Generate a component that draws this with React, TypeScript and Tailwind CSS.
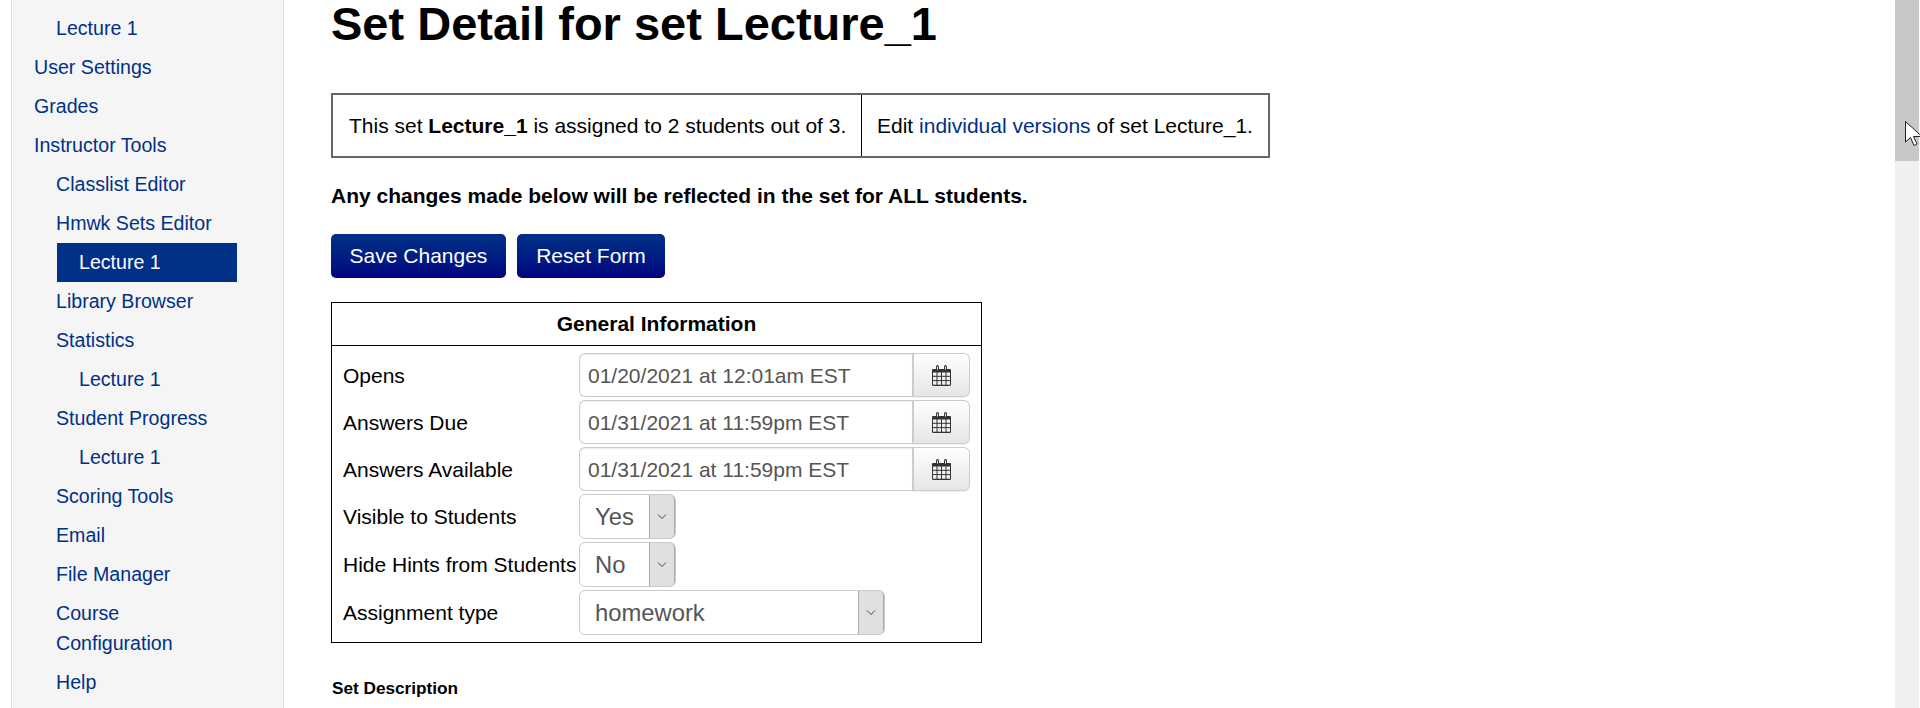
import React from "react";

const navItems = [
  { label: "Lecture 1", depth: 1 },
  { label: "User Settings", depth: 0 },
  { label: "Grades", depth: 0 },
  { label: "Instructor Tools", depth: 0 },
  { label: "Classlist Editor", depth: 1 },
  { label: "Hmwk Sets Editor", depth: 1 },
  { label: "Lecture 1", depth: 2, active: true },
  { label: "Library Browser", depth: 1 },
  { label: "Statistics", depth: 1 },
  { label: "Lecture 1", depth: 2 },
  { label: "Student Progress", depth: 1 },
  { label: "Lecture 1", depth: 2 },
  { label: "Scoring Tools", depth: 1 },
  { label: "Email", depth: 1 },
  { label: "File Manager", depth: 1 },
  { label: "Course Configuration", depth: 1 },
  { label: "Help", depth: 1 },
];

const CalendarIcon = () => (
  <svg width="19" height="21" viewBox="0 0 19 21" className="shrink-0">
    <path d="M1 4h17a1 1 0 0 1 1 1V19.5a1.5 1.5 0 0 1-1.5 1.5h-16A1.5 1.5 0 0 1 0 19.5V5a1 1 0 0 1 1-1z" fill="#333" />
    <rect x="4" y="0" width="3" height="6.5" rx="1.5" fill="#333" />
    <rect x="12" y="0" width="3" height="6.5" rx="1.5" fill="#333" />
    <rect x="5" y="1.5" width="1" height="3" fill="#eee" />
    <rect x="13" y="1.5" width="1" height="3" fill="#eee" />
    <g fill="#f0f0f0">
      <rect x="1" y="7.5" width="3.5" height="3.3" />
      <rect x="5.5" y="7.5" width="3.5" height="3.3" />
      <rect x="10" y="7.5" width="3.5" height="3.3" />
      <rect x="14.5" y="7.5" width="3.5" height="3.3" />
      <rect x="1" y="11.8" width="3.5" height="3.3" />
      <rect x="5.5" y="11.8" width="3.5" height="3.3" />
      <rect x="10" y="11.8" width="3.5" height="3.3" />
      <rect x="14.5" y="11.8" width="3.5" height="3.3" />
      <rect x="1" y="16.1" width="3.5" height="3.6" />
      <rect x="5.5" y="16.1" width="3.5" height="3.6" />
      <rect x="10" y="16.1" width="3.5" height="3.6" />
      <rect x="14.5" y="16.1" width="3.5" height="3.6" />
    </g>
  </svg>
);

const Chevron = () => (
  <svg width="10" height="6" viewBox="0 0 10 6" fill="none" stroke="#444" strokeWidth="1">
    <path d="M1 0.5l4 4 4-4" />
  </svg>
);

const DateRow = ({ label, value }: { label: string; value: string }) => (
  <div className="flex h-[44px] items-center">
    <div className="w-[247px] shrink-0 pt-[2px] pl-[11px]">{label}</div>
    <div className="flex h-full w-[391px]">
      <input
        readOnly
        value={value}
        className="h-full w-[333px] rounded-l-[6px] border border-r-0 border-[#ccc] bg-white pt-[2px] pl-[8px] text-[21px] text-[#555] shadow-[inset_0_1px_1px_rgba(0,0,0,0.08)] outline-none"
      />
      <div className="flex h-full w-[58px] items-center justify-center rounded-r-[6px] border border-l-2 border-[#ccc] bg-gradient-to-b from-white to-[#e6e6e6] shadow-[0_1px_1px_rgba(0,0,0,0.06)]">
        <CalendarIcon />
      </div>
    </div>
  </div>
);

const SelectRow = ({ label, value, wide }: { label: string; value: string; wide?: boolean }) => (
  <div className="flex h-[45px] items-center">
    <div className="w-[247px] shrink-0 pl-[11px] whitespace-nowrap">{label}</div>
    <div
      className={`flex h-full rounded-[6px] border border-[#ccc] bg-white ${wide ? "w-[306px]" : "w-[97px]"}`}
    >
      <div className="flex-1 pl-[15px] text-[23.8px] leading-[43px] text-[#555]">{value}</div>
      <div className="flex w-[26px] items-center justify-center rounded-r-[5px] border-l border-r border-[#aaa] bg-[#e0e0e0]">
        <Chevron />
      </div>
    </div>
  </div>
);

export default function App() {
  return (
    <div className="relative flex h-[708px] w-full overflow-hidden bg-white font-['Liberation_Sans',Arial,sans-serif] text-[21px] leading-[30px] text-black">
      <aside className="ml-[11px] w-[273px] shrink-0 border-x border-[#e3e3e3] bg-[#f5f5f5] pt-[9px] text-[19.6px]">
        {navItems.map((item, i) => (
          <a
            key={i}
            className={`block pt-[4px] pb-[5px] ${
              item.active
                ? "ml-[45px] w-[180px] bg-[#003087] pl-[22px] text-white"
                : item.depth === 0
                  ? "pr-[60px] pl-[22px] text-[#003087]"
                  : item.depth === 1
                    ? "pr-[60px] pl-[44px] text-[#003087]"
                    : "pr-[60px] pl-[67px] text-[#003087]"
            }`}
          >
            {item.label}
          </a>
        ))}
      </aside>

      <main className="ml-[47px] flex-1">
        <h1 className="h-[93px] text-[47px] leading-[48px] font-bold">Set Detail for set Lecture_1</h1>

        <div className="flex h-[65px] w-[939px] border-2 border-[#666]">
          <div className="flex w-[529px] items-center border-r border-black pt-[1px] pl-[16px]">
            <span>
              This set <b>Lecture_1</b> is assigned to 2 students out of 3.
            </span>
          </div>
          <div className="flex flex-1 items-center pt-[1px] pl-[15px]">
            <span>
              Edit <a className="text-[#003087]">individual versions</a> of set Lecture_1.
            </span>
          </div>
        </div>

        <p className="mt-[23px] font-bold">Any changes made below will be reflected in the set for ALL students.</p>

        <div className="mt-[23px] flex gap-[11px]">
          <button className="h-[44px] w-[175px] rounded-[5px] bg-gradient-to-b from-[#003087] to-[#000080] text-white">
            Save Changes
          </button>
          <button className="h-[44px] w-[148px] rounded-[5px] bg-gradient-to-b from-[#003087] to-[#000080] text-white">
            Reset Form
          </button>
        </div>

        <section className="mt-[24px] w-[651px] border border-black">
          <div className="h-[43px] border-b border-black pt-[6px] text-center font-bold">General Information</div>
          <div className="flex flex-col gap-[3px] pt-[7px] pb-[7px]">
            <DateRow label="Opens" value="01/20/2021 at 12:01am EST" />
            <DateRow label="Answers Due" value="01/31/2021 at 11:59pm EST" />
            <DateRow label="Answers Available" value="01/31/2021 at 11:59pm EST" />
            <SelectRow label="Visible to Students" value="Yes" />
            <SelectRow label="Hide Hints from Students" value="No" />
            <SelectRow label="Assignment type" value="homework" wide />
          </div>
        </section>

        <div className="mt-[30px] ml-[1px] text-[17.2px] font-bold">Set Description</div>
      </main>

      <div className="mr-px w-[24px] shrink-0 bg-[#f0f0f0]">
        <div className="h-[161px] bg-[#c8c8c8]" />
      </div>

      {/* mouse pointer from the capture */}
      <svg width="18" height="28" viewBox="0 0 18 28" className="absolute top-[121px] left-[1905px]">
        <path d="M0.5 0.5V21l5-4.5 3.5 8 3-1.5-3.5-7.5H17z" fill="#fff" stroke="#222" strokeWidth="1" />
      </svg>
    </div>
  );
}
